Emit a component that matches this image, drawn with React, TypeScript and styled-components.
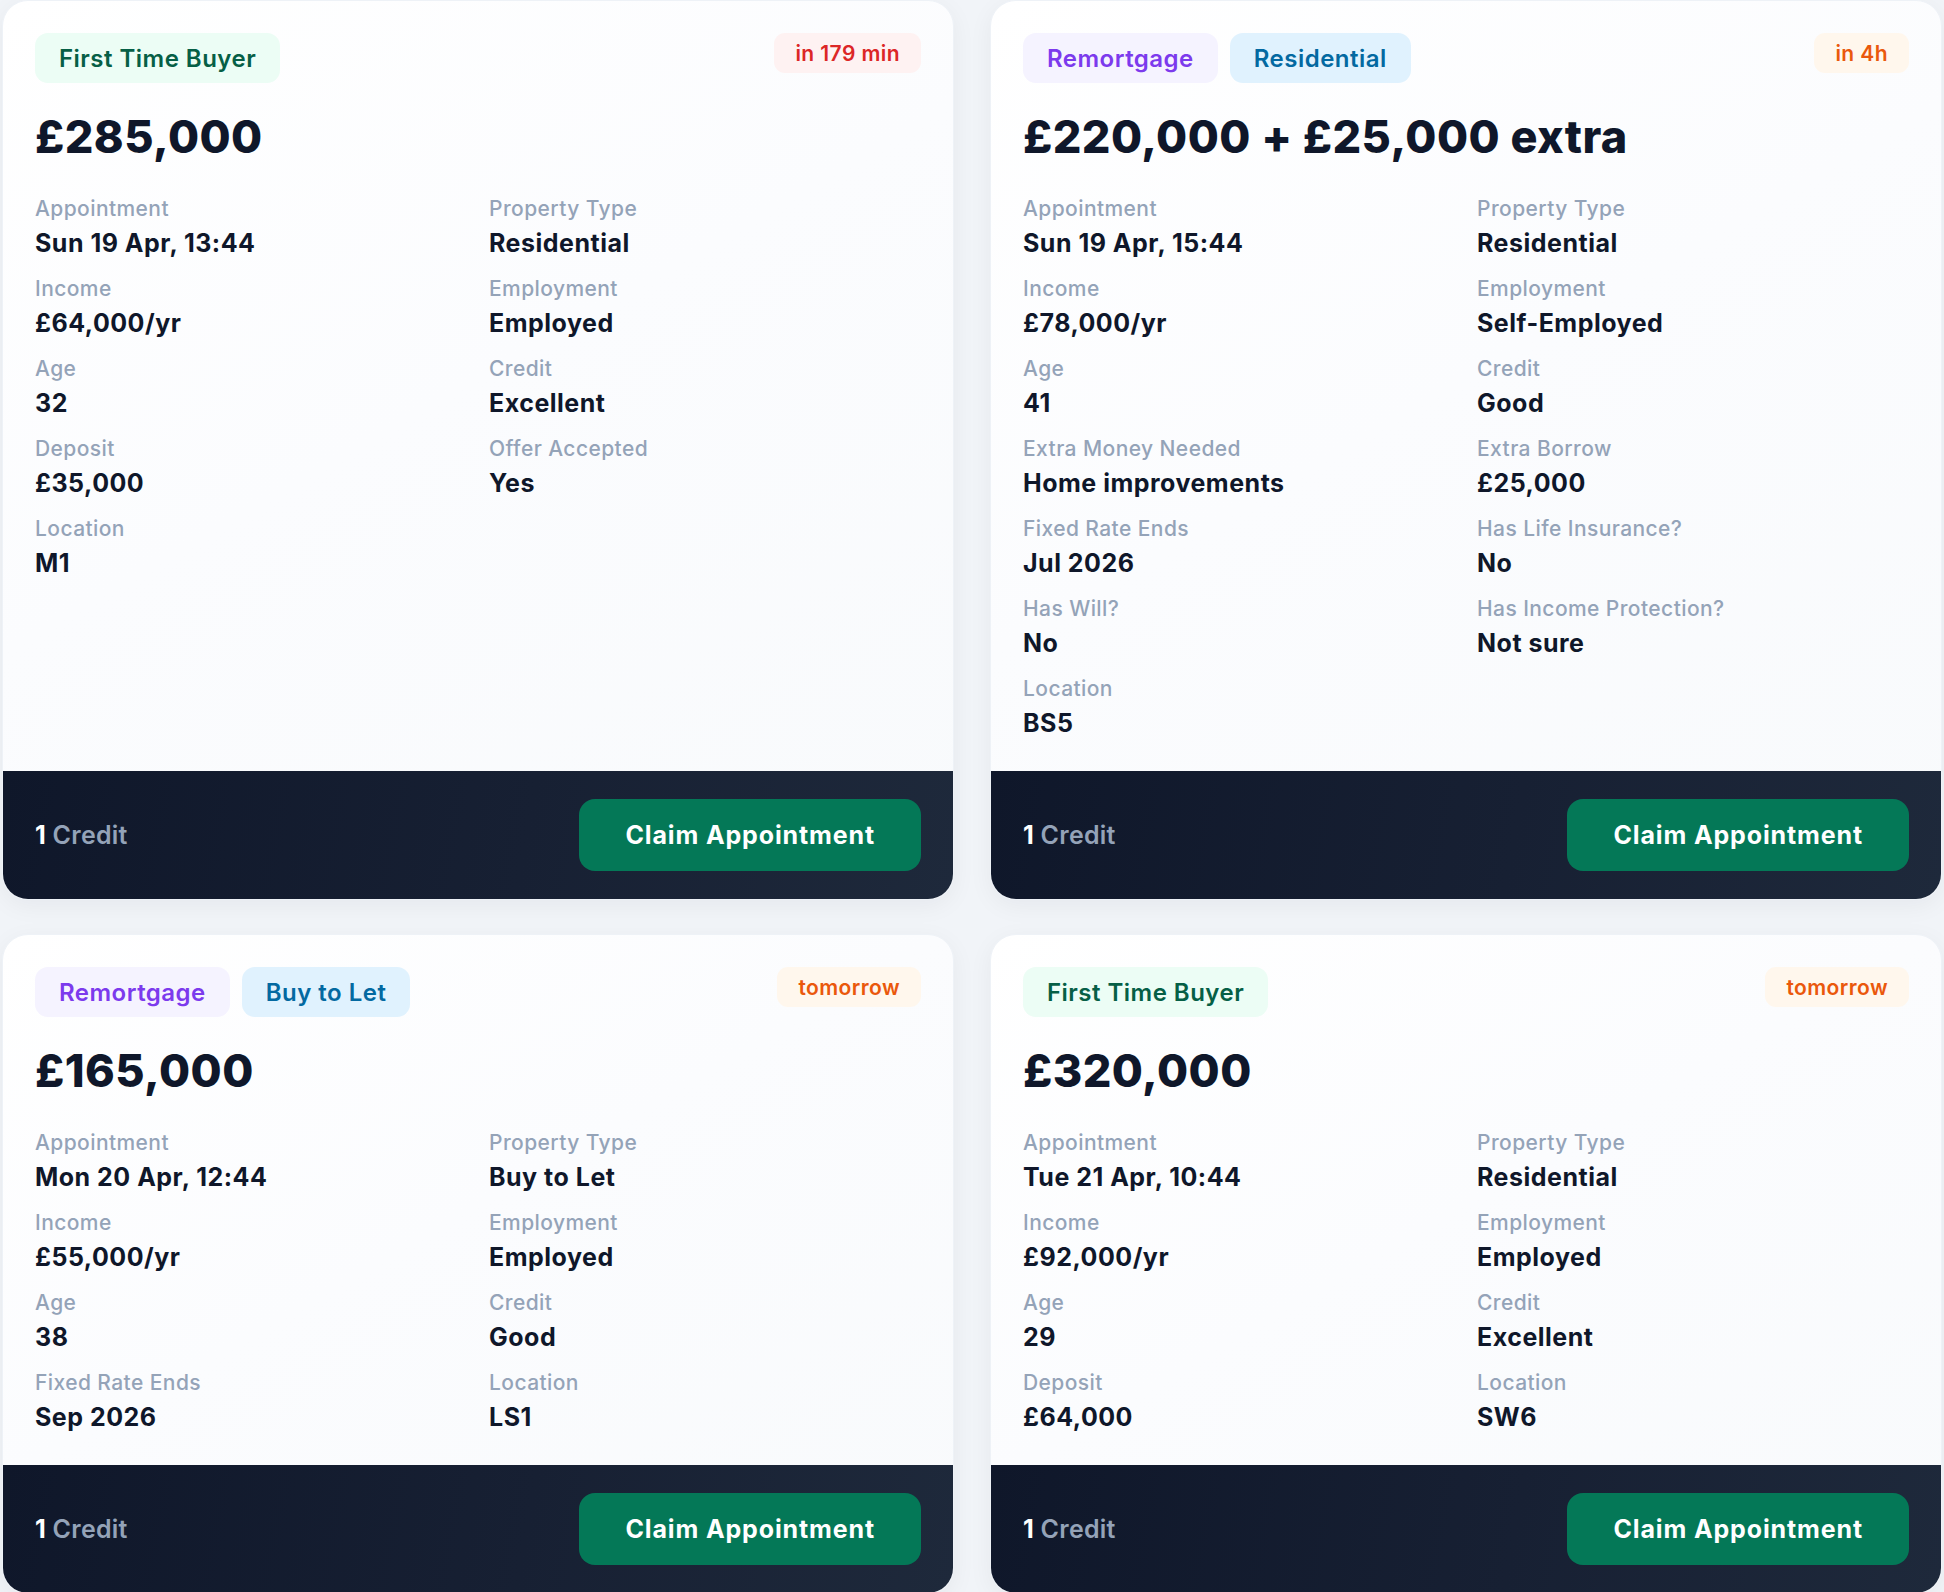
import styled, { createGlobalStyle } from 'styled-components';

type Tone = 'green' | 'purple' | 'blue';
type Urgency = 'red' | 'orange';

interface Field {
  label: string;
  value: string;
}

interface Lead {
  tags: { text: string; tone: Tone }[];
  when: string;
  urgency: Urgency;
  amount: string;
  fields: Field[];
}

const leads: Lead[] = [
  {
    tags: [{ text: 'First Time Buyer', tone: 'green' }],
    when: 'in 179 min',
    urgency: 'red',
    amount: '£285,000',
    fields: [
      { label: 'Appointment', value: 'Sun 19 Apr, 13:44' },
      { label: 'Property Type', value: 'Residential' },
      { label: 'Income', value: '£64,000/yr' },
      { label: 'Employment', value: 'Employed' },
      { label: 'Age', value: '32' },
      { label: 'Credit', value: 'Excellent' },
      { label: 'Deposit', value: '£35,000' },
      { label: 'Offer Accepted', value: 'Yes' },
      { label: 'Location', value: 'M1' },
    ],
  },
  {
    tags: [
      { text: 'Remortgage', tone: 'purple' },
      { text: 'Residential', tone: 'blue' },
    ],
    when: 'in 4h',
    urgency: 'orange',
    amount: '£220,000 + £25,000 extra',
    fields: [
      { label: 'Appointment', value: 'Sun 19 Apr, 15:44' },
      { label: 'Property Type', value: 'Residential' },
      { label: 'Income', value: '£78,000/yr' },
      { label: 'Employment', value: 'Self-Employed' },
      { label: 'Age', value: '41' },
      { label: 'Credit', value: 'Good' },
      { label: 'Extra Money Needed', value: 'Home improvements' },
      { label: 'Extra Borrow', value: '£25,000' },
      { label: 'Fixed Rate Ends', value: 'Jul 2026' },
      { label: 'Has Life Insurance?', value: 'No' },
      { label: 'Has Will?', value: 'No' },
      { label: 'Has Income Protection?', value: 'Not sure' },
      { label: 'Location', value: 'BS5' },
    ],
  },
  {
    tags: [
      { text: 'Remortgage', tone: 'purple' },
      { text: 'Buy to Let', tone: 'blue' },
    ],
    when: 'tomorrow',
    urgency: 'orange',
    amount: '£165,000',
    fields: [
      { label: 'Appointment', value: 'Mon 20 Apr, 12:44' },
      { label: 'Property Type', value: 'Buy to Let' },
      { label: 'Income', value: '£55,000/yr' },
      { label: 'Employment', value: 'Employed' },
      { label: 'Age', value: '38' },
      { label: 'Credit', value: 'Good' },
      { label: 'Fixed Rate Ends', value: 'Sep 2026' },
      { label: 'Location', value: 'LS1' },
    ],
  },
  {
    tags: [{ text: 'First Time Buyer', tone: 'green' }],
    when: 'tomorrow',
    urgency: 'orange',
    amount: '£320,000',
    fields: [
      { label: 'Appointment', value: 'Tue 21 Apr, 10:44' },
      { label: 'Property Type', value: 'Residential' },
      { label: 'Income', value: '£92,000/yr' },
      { label: 'Employment', value: 'Employed' },
      { label: 'Age', value: '29' },
      { label: 'Credit', value: 'Excellent' },
      { label: 'Deposit', value: '£64,000' },
      { label: 'Location', value: 'SW6' },
    ],
  },
];

const tagColors: Record<Tone, { fg: string; bg: string }> = {
  green: { fg: '#065f46', bg: '#ecfdf5' },
  purple: { fg: '#7c3aed', bg: '#f5f3ff' },
  blue: { fg: '#0369a1', bg: '#e0f2fe' },
};

const urgencyColors: Record<Urgency, { fg: string; bg: string }> = {
  red: { fg: '#dc2626', bg: '#fef2f2' },
  orange: { fg: '#ea580c', bg: '#fff7ed' },
};

export default function App() {
  return (
    <>
      <GlobalStyle />
      <Grid>
        {leads.map((lead, idx) => (
          <Card key={`lead-${idx}`}>
            <Body>
              <Header>
                <TagList>
                  {lead.tags.map((tag) => (
                    <Tag key={tag.text} $tone={tag.tone}>
                      {tag.text}
                    </Tag>
                  ))}
                </TagList>
                <When $urgency={lead.urgency}>{lead.when}</When>
              </Header>

              <Amount>{lead.amount}</Amount>

              <Fields>
                {lead.fields.map((field) => (
                  <FieldItem key={field.label}>
                    <Label>{field.label}</Label>
                    <Value>{field.value}</Value>
                  </FieldItem>
                ))}
              </Fields>
            </Body>

            <Footer>
              <Cost>
                <strong>1</strong> Credit
              </Cost>
              <ClaimButton type="button">Claim Appointment</ClaimButton>
            </Footer>
          </Card>
        ))}
      </Grid>
    </>
  );
}

const GlobalStyle = createGlobalStyle`
  * {
    box-sizing: border-box;
  }

  body {
    margin: 0;
    background: #f1f4f8;
    font-family: Inter, 'Noto Sans', sans-serif;
    -webkit-font-smoothing: antialiased;
  }
`;

const Grid = styled.div`
  display: grid;
  grid-template-columns: 1fr 1fr;
  column-gap: 36px;
  row-gap: 34px;
  padding: 0 2px;
`;

const Card = styled.article`
  display: flex;
  flex-direction: column;
  border: 1px solid #eef2f7;
  border-radius: 26px;
  overflow: hidden;
  background: linear-gradient(150deg, #ffffff 0%, #fbfcfe 45%, #f8fafc 100%);
  box-shadow: 0 6px 24px rgba(15, 23, 42, 0.05);
`;

const Body = styled.div`
  flex: 1;
  padding: 32px;
`;

const Header = styled.div`
  display: flex;
  justify-content: space-between;
  align-items: flex-start;
`;

const TagList = styled.ul`
  padding: 0;
  margin: 0;
  list-style: none;
  display: flex;
  gap: 12px;
`;

const Tag = styled.li<{ $tone: Tone }>`
  height: 50px;
  display: flex;
  align-items: center;
  padding: 0 24px;
  border-radius: 13px;
  font-size: 24px;
  font-weight: 600;
  letter-spacing: 0.02em;
  color: ${({ $tone }) => tagColors[$tone].fg};
  background-color: ${({ $tone }) => tagColors[$tone].bg};
`;

const When = styled.span<{ $urgency: Urgency }>`
  height: 40px;
  display: flex;
  align-items: center;
  padding: 0 21px;
  border-radius: 11px;
  font-size: 21px;
  font-weight: 600;
  letter-spacing: 0.02em;
  color: ${({ $urgency }) => urgencyColors[$urgency].fg};
  background-color: ${({ $urgency }) => urgencyColors[$urgency].bg};
`;

const Amount = styled.h2`
  margin: 27px 0 32px;
  font-size: 45px;
  line-height: 53px;
  font-weight: 800;
  letter-spacing: 0.01em;
  color: #0f172a;
`;

const Fields = styled.dl`
  margin: 0;
  display: grid;
  grid-template-columns: 1fr 1fr;
  column-gap: 22px;
  row-gap: 16px;
`;

const FieldItem = styled.div`
  display: flex;
  flex-direction: column;
  gap: 4px;
`;

const Label = styled.dt`
  font-size: 21px;
  line-height: 28px;
  font-weight: 500;
  letter-spacing: 0.02em;
  color: #94a3b8;
`;

const Value = styled.dd`
  margin: 0;
  font-size: 25px;
  line-height: 32px;
  font-weight: 700;
  letter-spacing: 0.02em;
  color: #0f172a;
`;

const Footer = styled.div`
  display: flex;
  align-items: center;
  justify-content: space-between;
  padding: 28px 32px;
  background: linear-gradient(100deg, #0f172a 0%, #172033 55%, #1e293b 100%);
`;

const Cost = styled.span`
  font-size: 25px;
  font-weight: 600;
  letter-spacing: 0.01em;
  color: #94a3b8;

  strong {
    font-weight: 700;
    color: #ffffff;
  }
`;

const ClaimButton = styled.button`
  height: 72px;
  padding: 0 46px;
  border: none;
  border-radius: 16px;
  background-color: #047857;
  font-family: inherit;
  font-size: 25px;
  font-weight: 700;
  letter-spacing: 0.035em;
  color: #ffffff;
  cursor: pointer;
`;
